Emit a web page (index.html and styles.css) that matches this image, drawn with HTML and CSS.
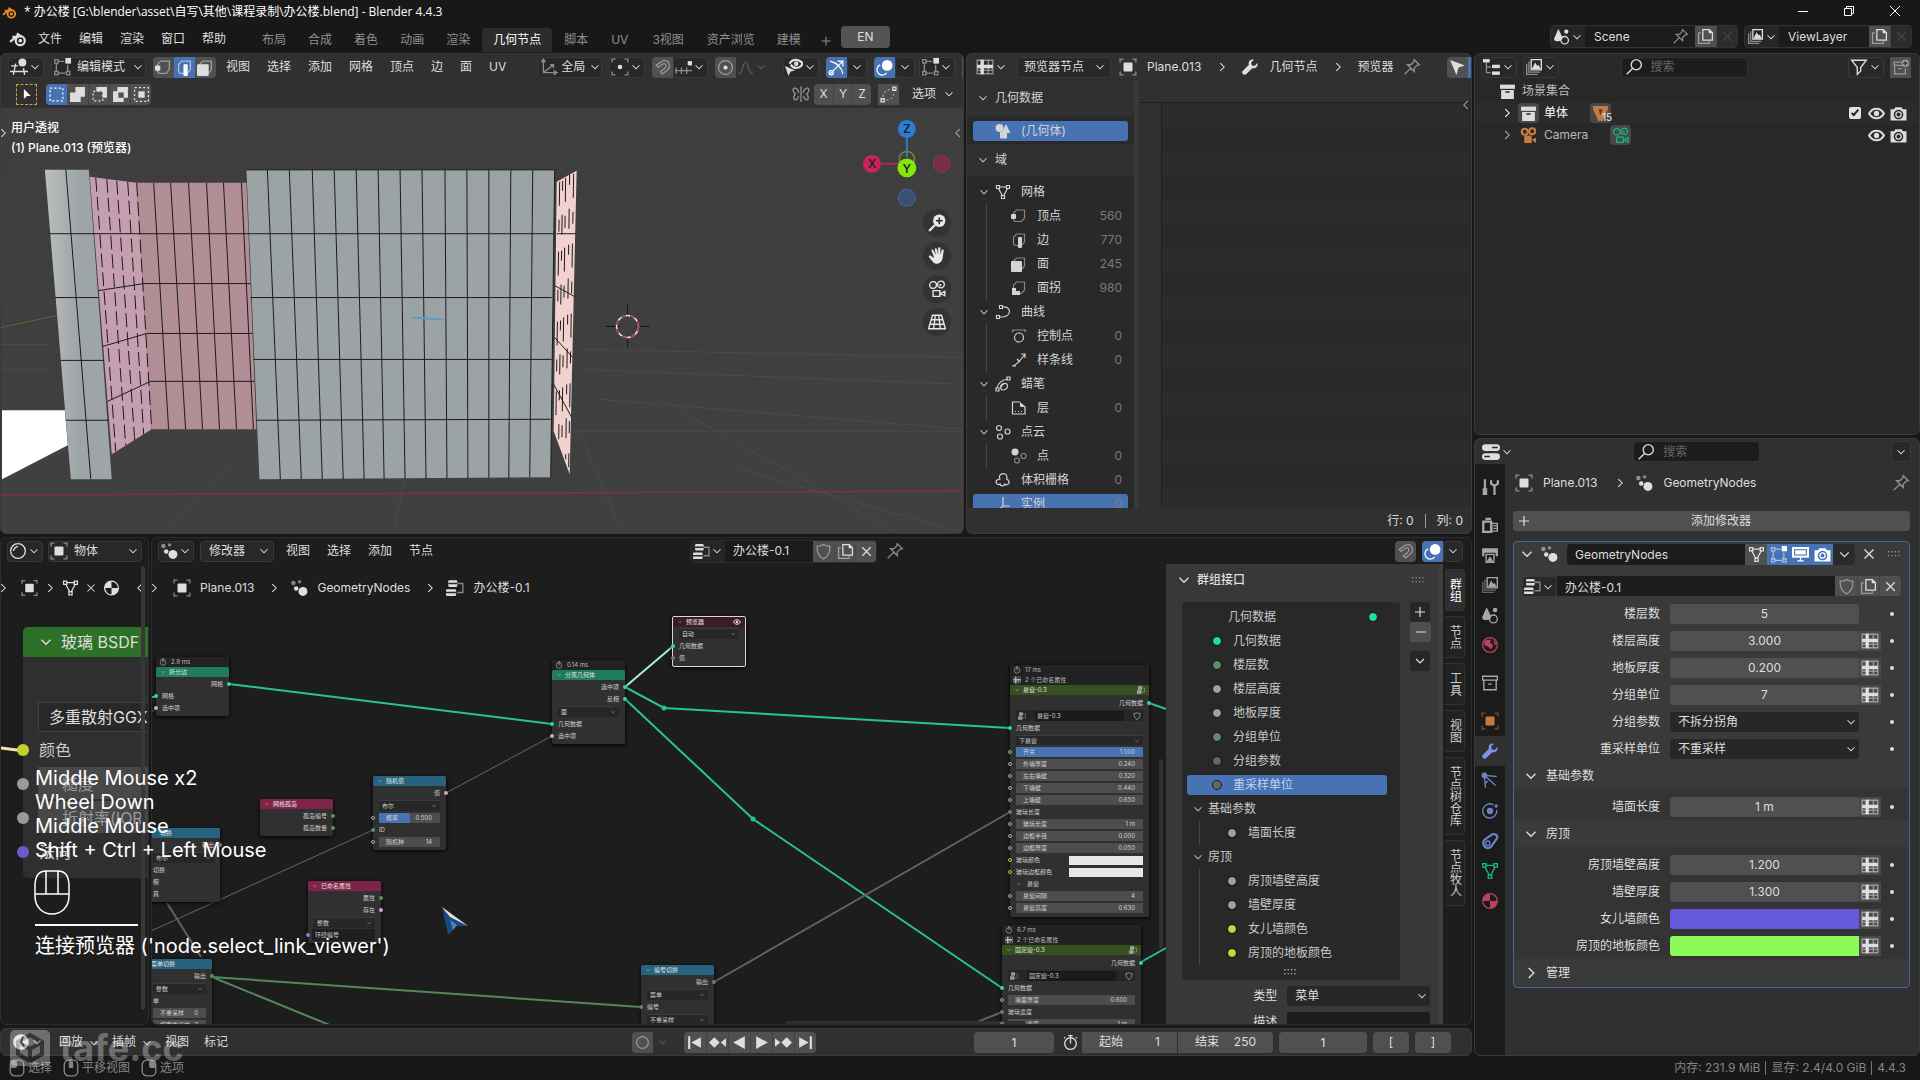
FILE: index.html
```html
<!DOCTYPE html>
<html lang="zh-CN">
<head>
<meta charset="utf-8">
<title>办公楼.blend - Blender 4.4.3</title>
<link rel="stylesheet" href="styles.css">
</head>
<body>
<svg class="defs" aria-hidden="true">
<defs>
<symbol id="cd" viewBox="0 0 16 16"><path class="s" d="M4 6l4 4 4-4"/></symbol>
<symbol id="cr" viewBox="0 0 16 16"><path class="s" d="M6 3.500l4.500 4.500-4.500 4.500"/></symbol>
<symbol id="cl" viewBox="0 0 16 16"><path class="s" d="M10 3.500l-4.500 4.500 4.500 4.500"/></symbol>
<symbol id="plus" viewBox="0 0 16 16"><path class="s" d="M8 3v10M3 8h10"/></symbol>
<symbol id="minus" viewBox="0 0 16 16"><path class="s" d="M3 8h10"/></symbol>
<symbol id="x" viewBox="0 0 16 16"><path class="s" d="M4 4l8 8M12 4l-8 8"/></symbol>
<symbol id="blender" viewBox="0 0 16 16"><path class="s w2" d="M1 10.500l7-6M3 6h6M7 3l4 3"/><circle class="s w2" cx="10" cy="9.500" r="4"/><circle class="f" cx="10" cy="9.500" r="1.700"/></symbol>
<symbol id="obj" viewBox="0 0 16 16"><path class="s dim" d="M1 4V1h3M12 1h3v3M15 12v3h-3M4 15H1v-3"/><rect class="f" x="4" y="4" width="8" height="8" rx="1"/></symbol>
<symbol id="wrench" viewBox="0 0 16 16"><path class="f" d="M14.500 4.500L12 7 9.500 6.500 9 4l2.500-2.500C9 .5 6 2.500 7 6L1.500 11.500c-1.500 1.500 1 4.500 3 3L10 9c3.500 1 5.500-2 4.500-4.500z"/></symbol>
<symbol id="pin" viewBox="0 0 16 16"><path class="s dim" d="M10 1.500l4.500 4.500-2 .5-2.500 2.500v3L4 6h3l2.500-2.500zM7 9l-5.500 5.500"/></symbol>
<symbol id="mesh" viewBox="0 0 16 16"><path class="s" d="M4 3h8M3.500 4.500l4 7.500M12.500 4.500l-4 7.500"/><path class="s" d="M1.500 1.500h3v3h-3zM11.500 1.500h3v3h-3zM6.500 11.500h3v3h-3z"/></symbol>
<symbol id="meshf" viewBox="0 0 16 16"><path class="f" fill-rule="evenodd" d="M1 1h14v3l-5 11H6L1 4zM6 4l2 6 2-6z"/></symbol>
<symbol id="cube" viewBox="0 0 16 16"><path class="s dim" d="M2.500 12V5l3-3h8v8l-3 3.500H4z"/></symbol>
<symbol id="vert" viewBox="0 0 16 16"><use href="#cube"/><rect class="f" x="0" y="6" width="5" height="5" rx="1"/></symbol>
<symbol id="edge" viewBox="0 0 16 16"><use href="#cube"/><rect class="f" x="7" y="5" width="4" height="11" rx="1"/></symbol>
<symbol id="face" viewBox="0 0 16 16"><use href="#cube"/><rect class="f" x="0" y="5" width="11" height="11" rx="1"/></symbol>
<symbol id="corner" viewBox="0 0 16 16"><use href="#cube"/><path class="f" d="M1 8h4v3h4v4H1z"/></symbol>
<symbol id="curve" viewBox="0 0 16 16"><path class="s" d="M8 3c8-1 9 9 0 10H5"/><path class="s" d="M4.500 1.500h3v3h-3zM1.500 11.500h3v3h-3z"/></symbol>
<symbol id="ctrl" viewBox="0 0 16 16"><circle class="s" cx="8" cy="9.500" r="4.500"/><path class="s dim" d="M1 2h14M1 4l2-2M15 4l-2-2"/></symbol>
<symbol id="spline" viewBox="0 0 16 16"><path class="s" d="M2 14C5 13 9 9 14 2M10 2h4v4M1 14h4M6 7l3 3"/></symbol>
<symbol id="gp" viewBox="0 0 16 16"><path class="s" d="M2 12c1-5 5-8 11-9M6 13c-2-4 3-7 6-5 2 3-1 6-4 6-4 0-2-5 1-6"/><path class="s" d="M1 12h3v3H1zM12 1h3v3h-3z"/></symbol>
<symbol id="layer" viewBox="0 0 16 16"><path class="s" d="M14 7v7H1.500V2H9"/><path class="f" d="M9 2l6 5h-5c-1 0-1-1-1-1zM4 11h1v1H4zM7 11h1v1H7zM10 11h1v1h-1z"/></symbol>
<symbol id="pcloud" viewBox="0 0 16 16"><circle class="s" cx="4" cy="4" r="2.500"/><circle class="s" cx="12.500" cy="7.500" r="2.500"/><circle class="s" cx="5" cy="12.500" r="2.500"/></symbol>
<symbol id="point" viewBox="0 0 16 16"><circle class="f" cx="4" cy="4" r="3.500"/><circle class="s dim" cx="12.500" cy="8" r="2.500"/><circle class="s dim" cx="6" cy="12.500" r="2.500"/></symbol>
<symbol id="volume" viewBox="0 0 16 16"><path class="s" d="M5 7c-3-5 6-8 7-2-1 2 0 2 1 3 3 3-1 6-3 4-1 3-5 2-5 0-3 2-5-2-3-4z"/></symbol>
<symbol id="inst" viewBox="0 0 16 16"><path class="s" d="M8 1v9h7M8 10l-6 5"/></symbol>
<symbol id="geo" viewBox="0 0 16 16"><circle class="f" cx="4.500" cy="5" r="4"/><path class="f" d="M11 1l4.500 9h-9z"/><rect class="f" x="5" y="8.500" width="7" height="7" rx="1"/></symbol>
<symbol id="sheet" viewBox="0 0 16 16"><path class="s dim" d="M1 2h14v12H1zM11 2v12M1 11h14"/><path class="s w3" d="M5.500 1.500v13M1 7.500h14"/></symbol>
<symbol id="dots" viewBox="0 0 16 16"><circle class="f dim" cx="3" cy="3.500" r="2"/><circle class="f dim" cx="8.500" cy="2.500" r="1.500"/><circle class="f" cx="5.500" cy="8.500" r="2"/><circle class="f" cx="11.500" cy="11" r="4"/></symbol>
<symbol id="tree" viewBox="0 0 16 16"><path class="s dim" d="M10 4h5v8h-5"/><rect class="f" x="2" y="1" width="8" height="6" rx="1"/><rect class="f" x="0" y="9" width="9" height="6" rx="1"/><path class="k" d="M2 4h8M0 12h9"/></symbol>
<symbol id="shield" viewBox="0 0 16 16"><path class="s" d="M8 1.500c2 1 4 1.500 6 1.500 0 6-1 9-6 12-5-3-6-6-6-12 2 0 4-.5 6-1.500z"/></symbol>
<symbol id="copy" viewBox="0 0 16 16"><path class="s dim" d="M3.500 4.500h-2v10h10v-2"/><path class="s" d="M5.500 1.500h6l3 3v7h-9z"/><path class="f" d="M11 1v4h4z"/></symbol>
<symbol id="magnet" viewBox="0 0 16 16"><path class="s" d="M2 6l6-4c6-2 9 5 4 9l-4 3-2-2 4-3c3-3 0-6-2-4L4 8z"/></symbol>
<symbol id="overlay" viewBox="0 0 16 16"><circle class="f" cx="10.500" cy="6" r="5"/><path class="s" d="M4 5.500a5 5 0 1 0 6 7.500"/></symbol>
<symbol id="scene" viewBox="0 0 16 16"><path class="f" d="M5 1l4 8c0 4-8 5-8 1z"/><circle class="f" cx="12.500" cy="3.500" r="2"/><circle class="s" cx="11" cy="11.500" r="3.500"/></symbol>
<symbol id="images" viewBox="0 0 16 16"><path class="s dim" d="M1.500 5v9.500h10M3.500 3v9.500h10"/><path class="s" d="M5.500 1.500h9v9h-9z"/><path class="f" d="M6 10l3-6 2 3 1-1 2 4z"/></symbol>
<symbol id="search" viewBox="0 0 16 16"><circle class="s" cx="10" cy="6" r="4.500"/><path class="s" d="M6.500 9.500L1.500 14.500"/></symbol>
<symbol id="funnel" viewBox="0 0 16 16"><path class="s" d="M1.500 2h13L9.500 8.500v3l-3 3v-6z"/></symbol>
<symbol id="archive" viewBox="0 0 16 16"><rect class="f" x="1" y="1.500" width="14" height="4"/><path class="f" d="M2 6.500h12V15H2z"/><path class="k" d="M6 8.500h4"/></symbol>
<symbol id="archo" viewBox="0 0 16 16"><path class="s" d="M1.500 2h13v3.500h-13zM2.500 5.500V14h11V5.500M6.500 9h3"/></symbol>
<symbol id="eye" viewBox="0 0 16 16"><path class="s w2" d="M1 8c3.500-6 10.500-6 14 0-3.500 6-10.500 6-14 0z"/><circle class="f" cx="8" cy="8" r="2.500"/></symbol>
<symbol id="photo" viewBox="0 0 16 16"><path class="f" fill-rule="evenodd" d="M5 2h6l1 2h3.500v10.500H.5V4H4zM8 4.500a4.500 4.500 0 1 0 .01 0z"/><circle class="s" cx="8" cy="9" r="2.500"/></symbol>
<symbol id="movie" viewBox="0 0 16 16"><circle class="s" cx="4.500" cy="4.500" r="3"/><circle class="s" cx="11.500" cy="4" r="3"/><circle class="f" cx="11" cy="4.500" r="1"/><path class="s" d="M4.500 9.500h6v5h-6zM11 12l4-2v4z"/></symbol>
<symbol id="movief" viewBox="0 0 16 16"><circle class="s w2" cx="4.500" cy="4.500" r="2.800"/><circle class="s w2" cx="11.500" cy="4" r="2.800"/><path class="f" d="M4 8h7v7H4zM11 12l4-2v5z"/></symbol>
<symbol id="mat" viewBox="0 0 16 16"><circle class="s" cx="8" cy="8" r="6.500"/><path class="f" d="M8 1.500V8H1.500A6.500 6.500 0 0 1 8 1.500zM8 8h6.500A6.500 6.500 0 0 1 8 14.500z"/></symbol>
<symbol id="ball" viewBox="0 0 16 16"><circle class="s" cx="8" cy="8" r="6.500"/><path class="s" d="M4 8c0-2 2-4 4-4"/></symbol>
<symbol id="clock" viewBox="0 0 16 16"><circle class="f" cx="8" cy="8" r="7"/><path class="k" d="M10 3L8 8l3 4"/></symbol>
<symbol id="watch" viewBox="0 0 16 16"><circle class="s" cx="8" cy="9" r="5.500"/><path class="s" d="M6 1.500h4M8 1.500V9M3 3L2 4M13 3l1 1"/></symbol>
<symbol id="tool" viewBox="0 0 16 16"><path class="s w2" d="M3.500 1v9M12 7v8M9 2v3l3 2 3-2V2"/><path class="f" d="M1.500 9h4v6h-4z"/></symbol>
<symbol id="render" viewBox="0 0 16 16"><path class="s w2" d="M2 5h7v9H2zM4 2.500h5"/><path class="s" d="M9.500 6.500h5v7h-5zM11 8.500h3M11 11h3"/></symbol>
<symbol id="print" viewBox="0 0 16 16"><path class="f" d="M1 2h14v7h-2V6H3v3H1z"/><path class="s" d="M4.500 7.500h7v7h-7z"/><path class="f" d="M5 14l3-5 3 5z"/></symbol>
<symbol id="world" viewBox="0 0 16 16"><circle class="s" cx="8" cy="8" r="6.500"/><path class="f" d="M3 4l6-1-1 3 3 2-2 4-2-2-4-2zM11 3l3 4-2 1z"/></symbol>
<symbol id="particle" viewBox="0 0 16 16"><circle class="f" cx="3" cy="3" r="2.500"/><path class="s" d="M3 3l11 1M3 3l10 9M3 3l1 11M6 8l-3 3"/></symbol>
<symbol id="physics" viewBox="0 0 16 16"><circle class="f" cx="8" cy="8" r="2.800"/><path class="s" d="M11 2.500A6.300 6.300 0 1 0 14 7"/><circle class="f" cx="13.500" cy="3.500" r="1.500"/></symbol>
<symbol id="constraint" viewBox="0 0 16 16"><path class="s w2" d="M3 7l7-5c4-1 5 2 4 4l-5 7c-4 4-9-2-6-6z"/><circle class="s" cx="6" cy="10" r="2"/></symbol>
<symbol id="grip" viewBox="0 0 16 16"><path class="s dots" d="M2 6h12M2 9.500h12"/></symbol>
<symbol id="v3d" viewBox="0 0 16 16"><circle class="f" cx="11" cy="4" r="3.500"/><path class="s" d="M1 7h6M0 12h16M5 5L3 15M12 9l1 6"/></symbol>
<symbol id="editm" viewBox="0 0 16 16"><path class="s dim" d="M3 5v7M5 3h5M5 13.500h6M13 6v6M1.500 1.500h3v3h-3zM1.500 12h3v3h-3zM12 12h3v3h-3z"/><rect class="f" x="11" y="0" width="5" height="5"/></symbol>
<symbol id="axes" viewBox="0 0 16 16"><path class="s dim" d="M3 2v11h12M3 13L12 6M1 4l2-3 2 3M12 11l3 2-3 2M9 6h3v3"/></symbol>
<symbol id="pivot" viewBox="0 0 16 16"><path class="s dim" d="M1 4V1h3M12 1h3v3M15 12v3h-3M4 15H1v-3"/><circle class="f" cx="8" cy="8" r="2"/></symbol>
<symbol id="inc" viewBox="0 0 16 16"><path class="s dim" d="M0 11h16M1 8v6M6 8v6M11 8v6"/><rect class="f" x="12" y="2" width="4" height="4"/></symbol>
<symbol id="prop" viewBox="0 0 16 16"><circle class="s dim" cx="8" cy="8" r="6.500"/><circle class="f" cx="8" cy="8" r="2"/></symbol>
<symbol id="bell" viewBox="0 0 16 16"><path class="s" d="M1 14C6 14 5 3 8 3s2 11 7 11"/></symbol>
<symbol id="vis" viewBox="0 0 16 16"><path class="s w2" d="M4 5c3-5 9-4 12 0-3 5-8 5-11 1"/><circle class="f" cx="10" cy="5" r="2"/><path class="f" d="M0 7l9 4-4 1-2 4z"/></symbol>
<symbol id="giz" viewBox="0 0 16 16"><path class="s" d="M2 2c7 2 11 6 12 12M2 14L14 2M9 2h5v5"/><circle class="s" cx="3" cy="13" r="2"/></symbol>
<symbol id="selbox" viewBox="0 0 16 16"><rect class="s dash" x="2" y="2" width="12" height="12"/></symbol>
<symbol id="selc" viewBox="0 0 16 16"><path class="s dash" d="M2 5h9v9H2z"/><path class="f" d="M5 1h10v10h-4V5H5z"/></symbol>
<symbol id="selu" viewBox="0 0 16 16"><path class="f" d="M6 1h9v9h-4v5H1V6h5z"/></symbol>
<symbol id="selx" viewBox="0 0 16 16"><path class="f" fill-rule="evenodd" d="M5 1h10v10h-4v4H1V5h4zM6 6v5h5V6z"/></symbol>
<symbol id="seli" viewBox="0 0 16 16"><rect class="s dash" x="1.500" y="1.500" width="13" height="13"/><rect class="f" x="5" y="5" width="6" height="6"/></symbol>
<symbol id="butterfly" viewBox="0 0 16 16"><path class="s dim" d="M6 7C5 2 1 2 1 4c0 3 1 3 2 4-2 2-2 6 1 5l2-3M10 7c1-5 5-5 5-3 0 3-1 3-2 4 2 2 2 6-1 5l-2-3M8 1v14"/></symbol>
<symbol id="autom" viewBox="0 0 16 16"><path class="s dim dash" d="M3 10c0-4 3-6 7-7M6 13c4 0 7-2 7-7"/><path class="s" d="M1 12h3v3H1zM12 1h3v3h-3z"/></symbol>
<symbol id="zoom" viewBox="0 0 16 16"><circle class="f" cx="10" cy="6" r="5.500"/><path class="s w2" d="M6 10l-5 5"/><path class="k" d="M10 3v6M7 6h6"/></symbol>
<symbol id="hand" viewBox="0 0 16 16"><path class="f" d="M5 8L3 3c0-1 1.500-1 2 0l2 4-1-5c0-1 1.500-1.500 2 0l1 5 0-6c0-1 2-1 2 0v6l1-4c0-1 2-1 2 0l-1 7c-1 5-6 6-8 4L1 9c-1-1 1-2 2-1l2 2z"/></symbol>
<symbol id="grid" viewBox="0 0 16 16"><path class="s" d="M4 2h8l3.500 12H.5zM3 6h10M2 10h12M6.500 2L5 14M9.500 2L11 14"/></symbol>
<symbol id="outl" viewBox="0 0 16 16"><rect class="f" x="0" y="1" width="6" height="3"/><rect class="f" x="8" y="6" width="7" height="3"/><rect class="f" x="8" y="12" width="7" height="3"/><path class="s dim" d="M3 4v9h4M3 8h4"/></symbol>
<symbol id="props" viewBox="0 0 16 16"><rect class="f" x="0" y="1" width="16" height="6" rx="3"/><rect class="f" x="0" y="9" width="16" height="6" rx="3"/><path class="k" d="M9 4h5M2 12h5"/></symbol>
<symbol id="newcol" viewBox="0 0 16 16"><path class="s" d="M9 3H2v3h8M2.500 6v8h10V9M6 9h3"/><circle class="f" cx="12.500" cy="4" r="3.500"/><path class="k" d="M12.500 2v4M10.500 4h4"/></symbol>
<symbol id="mon" viewBox="0 0 16 16"><rect class="s w2" x="1" y="2" width="14" height="8"/><rect class="f" x="3" y="4" width="10" height="4"/><path class="s" d="M5 14h6M8 10v4"/></symbol>
<symbol id="arrow" viewBox="0 0 16 16"><path class="f" d="M1 1l14 5-6 2-2 7z"/></symbol>
<symbol id="tarrow" viewBox="0 0 16 16"><path class="f" d="M3 0l11 11H8l-5 5z"/></symbol>
<symbol id="first" viewBox="0 0 16 16"><path class="f" d="M2 2h2v12H2zM14 3v10L5 8z"/></symbol>
<symbol id="last" viewBox="0 0 16 16"><path class="f" d="M12 2h2v12h-2zM2 3v10l9-5z"/></symbol>
<symbol id="pk" viewBox="0 0 16 16"><path class="f" d="M0 8l5-5 5 5-5 5zM16 4v8l-5-4z"/></symbol>
<symbol id="nk" viewBox="0 0 16 16"><path class="f" d="M16 8l-5-5-5 5 5 5zM0 4v8l5-4z"/></symbol>
<symbol id="rev" viewBox="0 0 16 16"><path class="f" d="M13 2v12L2 8z"/></symbol>
<symbol id="play" viewBox="0 0 16 16"><path class="f" d="M3 2v12l11-6z"/></symbol>
<symbol id="rec" viewBox="0 0 16 16"><circle class="s" cx="8" cy="8" r="5.500"/></symbol>
<symbol id="mouse" viewBox="0 0 16 16"><rect class="s" x="2" y="1" width="12" height="14" rx="4"/><rect class="f" x="2" y="1" width="6" height="7" rx="2"/></symbol>
<symbol id="mousem" viewBox="0 0 16 16"><rect class="s" x="2" y="1" width="12" height="14" rx="4"/><rect class="f" x="6" y="2" width="4" height="6" rx="1"/></symbol>
<symbol id="mouser" viewBox="0 0 16 16"><rect class="s" x="2" y="1" width="12" height="14" rx="4"/><rect class="f" x="8" y="1" width="6" height="7" rx="2"/></symbol>
</defs>
</svg>

<header class="titlebar">
  <svg class="i logo"><use href="#blender"/></svg>
  <h1>* 办公楼 [G:\blender\asset\自写\其他\课程录制\办公楼.blend] - Blender 4.4.3</h1>
  <div class="winbtns">
    <button aria-label="最小化"><svg viewBox="0 0 10 10"><path d="M0 5.500h10"/></svg></button>
    <button aria-label="还原"><svg viewBox="0 0 10 10"><path d="M.5 2.500h7v7h-7zM2.500 2.500v-2h7v7h-2"/></svg></button>
    <button aria-label="关闭"><svg viewBox="0 0 10 10"><path d="M0 0l10 10M10 0L0 10"/></svg></button>
  </div>
</header>
<nav class="topbar">
  <div class="menus"><svg class="i"><use href="#blender"/></svg><button>文件</button><button>编辑</button><button>渲染</button><button>窗口</button><button>帮助</button></div>
  <div class="tabs"><button>布局</button><button>合成</button><button>着色</button><button>动画</button><button>渲染</button><button class="on">几何节点</button><button>脚本</button><button class="lat">UV</button><button class="lat">3视图</button><button>资产浏览</button><button>建模</button><button class="add" aria-label="添加工作区"><svg class="i"><use href="#plus"/></svg></button></div>
  <button class="lang">EN</button>
  <div class="join scene"><button class="dd"><svg class="i"><use href="#scene"/></svg><svg class="c"><use href="#cd"/></svg></button><input aria-label="场景" value="Scene"><svg class="i pinned"><use href="#pin"/></svg><button class="g"><svg class="i"><use href="#copy"/></svg></button><button class="g off"><svg class="i"><use href="#x"/></svg></button></div>
  <div class="join vlayer"><button class="dd"><svg class="i"><use href="#images"/></svg><svg class="c"><use href="#cd"/></svg></button><input aria-label="视图层" value="ViewLayer"><button class="g"><svg class="i"><use href="#copy"/></svg></button><button class="g off"><svg class="i"><use href="#x"/></svg></button></div>
</nav>

<main>
<div class="left">
 <div class="toprow">
  <section class="area view3d">
    <div class="hdr">
      <button class="dd bx"><svg class="i"><use href="#v3d"/></svg><svg class="c"><use href="#cd"/></svg></button>
      <button class="dd bx mode"><svg class="i"><use href="#editm"/></svg><span>编辑模式</span><svg class="c"><use href="#cd"/></svg></button>
      <div class="join"><button class="g"><svg class="i"><use href="#vert"/></svg></button><button class="b"><svg class="i"><use href="#edge"/></svg></button><button class="g"><svg class="i"><use href="#face"/></svg></button></div>
      <div class="mn m3"><button>视图</button><button>选择</button><button>添加</button><button>网格</button><button>顶点</button><button>边</button><button>面</button><button>UV</button></div>
      <button class="dd bx orient"><svg class="i"><use href="#axes"/></svg><span>全局</span><svg class="c"><use href="#cd"/></svg></button>
      <button class="dd bx"><svg class="i"><use href="#pivot"/></svg><svg class="c"><use href="#cd"/></svg></button>
      <div class="join"><button class="g"><svg class="i dimmed"><use href="#magnet"/></svg></button><button class="dd bx"><svg class="i"><use href="#inc"/></svg><svg class="c"><use href="#cd"/></svg></button></div>
      <div class="join"><button class="g"><svg class="i"><use href="#prop"/></svg></button><button class="dd faded"><svg class="i"><use href="#bell"/></svg><svg class="c"><use href="#cd"/></svg></button></div>
      <span class="grow"></span>
      <button class="dd bx"><svg class="i"><use href="#vis"/></svg><svg class="c"><use href="#cd"/></svg></button>
      <div class="join"><button class="b"><svg class="i"><use href="#giz"/></svg></button><button class="dd bx nar"><svg class="c"><use href="#cd"/></svg></button></div>
      <div class="join"><button class="b"><svg class="i"><use href="#overlay"/></svg></button><button class="dd bx nar"><svg class="c"><use href="#cd"/></svg></button></div>
      <button class="dd bx tight"><svg class="i"><use href="#editm"/></svg><svg class="c"><use href="#cd"/></svg></button>
      <button class="g cut"><svg class="i"><use href="#images"/></svg></button>
    </div>
    <div class="hdr tools">
      <button class="arrowbox"><svg class="i"><use href="#tarrow"/></svg></button>
      <div class="join"><button class="b"><svg class="i"><use href="#selbox"/></svg></button><button class="g"><svg class="i"><use href="#selu"/></svg></button><button class="g"><svg class="i"><use href="#selc"/></svg></button><button class="g"><svg class="i"><use href="#selx"/></svg></button><button class="g"><svg class="i"><use href="#seli"/></svg></button></div>
      <span class="grow"></span>
      <svg class="i"><use href="#butterfly"/></svg>
      <div class="join xyz"><button class="g">X</button><button class="g">Y</button><button class="g">Z</button></div>
      <button class="g"><svg class="i"><use href="#autom"/></svg></button>
      <button class="dd bx opts"><span>选项</span><svg class="c"><use href="#cd"/></svg></button>
    </div>
    <div class="vp">
      <svg class="scene3d" viewBox="0 108 965 426" preserveAspectRatio="xMinYMin slice">
        <defs><linearGradient id="colg"><stop offset="0" stop-color="#bcbebe"/><stop offset=".5" stop-color="#9da5a7"/></linearGradient></defs>
        <g stroke="#4a4a4a" fill="none"><path d="M0 480L120 425M160 534L252 440M393 534L405 478M623 534L580 434M740 470L965 534M560 432H965M600 400L965 430M0 370H50M0 345H50M580 370L965 385M580 350L965 358M660 400L900 534"/></g>
        <path d="M0 328L56 316" stroke="#5e6436"/>
        <path d="M0 496L965 492" stroke="#842f47" stroke-width="1.500"/>
        <path d="M1 411H64L67 446L1 480z" fill="#fff"/>
        <path d="M136 183H246L256 430H151z" fill="#b18d95"/>
        <path d="M89 177L136 183L151 430L111 455z" fill="#c59faf"/>
        <path d="M44 170H88L111 480H70z" fill="url(#colg)"/>
        <path d="M246 170H555L551 478L259 480z" fill="#9ca3a5"/>
        <path d="M557 182L577 171L570 475L554 432z" fill="#f1d2ce"/>
        <g stroke="#1b1b1d" fill="none">
          <path d="M65 170L90 480M48 234H93M54 298H98M60 361H103M65 421H108"/>
          <path d="M92 234H246M98 291L143 284H250M102 347L146 334H252M107 402L150 382H254"/>
          <path d="M153 183L168 430M170 183L185 430M188 183L202 430M206 183L219 430M223 183L236 430M241 183L253 430"/>
          <path stroke-dasharray="14 5" d="M95 178L115 452M106 179L125 446M116 181L134 441M127 182L143 435M136 183L151 430"/>
          <path d="M267 170L280 480M289 170L301 480M312 170L322 480M334 170L343 480M356 170L364 480M378 170L384 480M400 170L405 480M422 170L426 480M445 170L447 479M467 170L468 479M489 170L489 479M511 170L509 479M533 170L530 478M555 170L551 478"/>
          <path d="M246 234H554M250 298H552M253 360H552M256 421L551 420M557 234H576M555 286L575 297M555 338L573 358M554 385L572 418M246 170H555"/>
          <path stroke-dasharray="24 14 12 20" d="M560 182L556 430M566 178L562 455M574 174L569 468"/>
          <path stroke-dasharray="10 24 20 16" d="M563 181L559 440M570 175L566 460"/>
        </g>
        <path d="M412 318L444 320" stroke="#5b9cc4" stroke-width="2"/>
        <path d="M628 305v13M628 336v12M606 327h14M636 327h14" stroke="#161616"/>
        <circle cx="628" cy="327" r="11" fill="none" stroke="#e6e6e6" stroke-width="1.500"/><circle cx="628" cy="327" r="11" fill="none" stroke="#a32743" stroke-width="1.500" stroke-dasharray="5 4"/>
        <path d="M908 137v20" stroke="#2f79c9" stroke-width="2"/><path d="M880 164h20" stroke="#b32752" stroke-width="2"/>
        <circle cx="908" cy="159" r="7.500" fill="none" stroke="#6f8a3a" stroke-width="1.500"/>
        <circle cx="908" cy="129" r="9" fill="#2c7dd2"/><circle cx="873" cy="164" r="9" fill="#c9235a"/><circle cx="908" cy="168" r="9.500" fill="#85e60c"/>
        <circle cx="943" cy="164" r="8.500" fill="#74304a" stroke="#9c2c50"/><circle cx="908" cy="198" r="8.500" fill="#3c4f70" stroke="#3c6ca8"/>
        <g class="ax"><text x="908" y="133">Z</text><text x="873" y="168">X</text><text x="908" y="173">Y</text></g>
      </svg>
      <p class="vtext">用户透视<br>(1) Plane.013 (预览器)</p>
      <div class="navs"><button aria-label="缩放"><svg class="i"><use href="#zoom"/></svg></button><button aria-label="平移"><svg class="i"><use href="#hand"/></svg></button><button aria-label="相机"><svg class="i"><use href="#movie"/></svg></button><button aria-label="透视"><svg class="i"><use href="#grid"/></svg></button></div>
      <svg class="c edgel"><use href="#cr"/></svg><svg class="c edger"><use href="#cl"/></svg>
    </div>
  </section>

  <section class="area sheet">
    <div class="hdr">
      <button class="dd"><svg class="i"><use href="#sheet"/></svg><svg class="c"><use href="#cd"/></svg></button>
      <button class="dd bx pv"><span>预览器节点</span><svg class="c"><use href="#cd"/></svg></button>
      <div class="crumb"><svg class="i"><use href="#obj"/></svg><span>Plane.013</span><svg class="c"><use href="#cr"/></svg><svg class="i"><use href="#wrench"/></svg><span>几何节点</span><svg class="c"><use href="#cr"/></svg><span>预览器</span><svg class="i"><use href="#pin"/></svg></div>
      <span class="grow"></span>
      <div class="join edgebtn"><button class="g"><svg class="i"><use href="#arrow"/></svg></button><button class="b"></button></div>
    </div>
    <div class="sbody">
      <div class="tree">
        <h2><svg class="c"><use href="#cd"/></svg>几何数据</h2>
        <div class="selrow"><svg class="i"><use href="#geo"/></svg>(几何体)</div>
        <h2><svg class="c"><use href="#cd"/></svg>域</h2>
        <ul>
          <li><svg class="c"><use href="#cd"/></svg><svg class="i"><use href="#mesh"/></svg>网格</li>
          <li class="sub"><svg class="i"><use href="#vert"/></svg>顶点<b>560</b></li>
          <li class="sub"><svg class="i"><use href="#edge"/></svg>边<b>770</b></li>
          <li class="sub"><svg class="i"><use href="#face"/></svg>面<b>245</b></li>
          <li class="sub"><svg class="i"><use href="#corner"/></svg>面拐<b>980</b></li>
          <li><svg class="c"><use href="#cd"/></svg><svg class="i"><use href="#curve"/></svg>曲线</li>
          <li class="sub"><svg class="i"><use href="#ctrl"/></svg>控制点<b>0</b></li>
          <li class="sub"><svg class="i"><use href="#spline"/></svg>样条线<b>0</b></li>
          <li><svg class="c"><use href="#cd"/></svg><svg class="i"><use href="#gp"/></svg>蜡笔</li>
          <li class="sub"><svg class="i"><use href="#layer"/></svg>层<b>0</b></li>
          <li><svg class="c"><use href="#cd"/></svg><svg class="i"><use href="#pcloud"/></svg>点云</li>
          <li class="sub"><svg class="i"><use href="#point"/></svg>点<b>0</b></li>
          <li class="leaf"><svg class="i"><use href="#volume"/></svg>体积栅格<b>0</b></li>
          <li class="leaf act"><svg class="i"><use href="#inst"/></svg>实例<b>0</b></li>
        </ul>
      </div>
      <div class="cells"></div>
      <svg class="c edger"><use href="#cl"/></svg>
    </div>
    <div class="sfoot"><span>行: 0</span><i></i><span>列: 0</span></div>
  </section>
 </div>

 <div class="noderow">
  <section class="area mated">
    <div class="hdr"><button class="dd bx"><svg class="i"><use href="#ball"/></svg><svg class="c"><use href="#cd"/></svg></button><button class="dd bx wide"><svg class="i"><use href="#obj"/></svg><span>物体</span><svg class="c"><use href="#cd"/></svg></button></div>
    <div class="mcrumb"><svg class="c"><use href="#cr"/></svg><svg class="i"><use href="#obj"/></svg><svg class="c"><use href="#cr"/></svg><svg class="i"><use href="#mesh"/></svg><svg class="c"><use href="#x"/></svg><svg class="i"><use href="#mat"/></svg><svg class="c"><use href="#cl"/></svg></div>
    <svg class="mlink"><path d="M0 210l24 3" stroke="#eee6b0" stroke-width="3"/></svg>
    <article class="bsdf">
      <h3><svg class="i"><use href="#cd"/></svg>玻璃 BSDF</h3>
      <div class="dist">多重散射GGX</div>
      <p class="sk y">颜色</p><p class="sk fld">糙度</p><p class="sk fld">折射率(IOR</p><p class="sk v">法向</p>
    </article>
    <i class="vbar"></i>
  </section>

  <section class="area geoed">
    <div class="canvas">
      <svg class="links"><g transform="translate(-151 -537)" fill="none">
        <g stroke="#27c492" stroke-width="2"><path d="M151 697h5M229 684L552 724M625 687L664 708L1010 728M625 699L753 819L1002 988M1149 703L1166 709M1141 962L1166 948"/></g>
        <path d="M625 687L672 647" stroke="#a9efd8" stroke-width="2"/>
        <path d="M446 793L552 736M151 712l5-3M151 931L373 830" stroke="#66666a"/>
        <path d="M714 982L1010 812M967 1026L1002 1012M167 903L201 957" stroke="#626262" stroke-width="2"/>
        <path d="M212 977L641 1007M212 977L332 1026" stroke="#54875a" stroke-width="2"/>
        <g fill="#27c492"><circle cx="664" cy="708" r="2.500"/><circle cx="753" cy="819" r="2.500"/></g>
      </g></svg>
      <article class="node n-split"><div class="ms"><svg><use href="#watch"/></svg>2.9 ms</div><h3 class="green"><svg><use href="#cd"/></svg>拆分边</h3><p class="o geo">网格</p><p class="geo">网格</p><p class="bool">选中项</p></article>
      <article class="node n-view"><h3 class="wine"><svg><use href="#cd"/></svg>预览器<svg class="end"><use href="#eye"/></svg></h3><div class="ds">自动<svg><use href="#cd"/></svg></div><p class="geo">几何数据</p><p class="gray">值</p></article>
      <article class="node n-sep"><div class="ms"><svg><use href="#watch"/></svg>0.14 ms</div><h3 class="green"><svg><use href="#cd"/></svg>分离几何体</h3><p class="o geo">选中项</p><p class="o geo">反相</p><div class="ds">面<svg><use href="#cd"/></svg></div><p class="geo">几何数据</p><p class="bool">选中项</p></article>
      <article class="node n-rand"><h3 class="blue"><svg><use href="#cd"/></svg>随机值</h3><p class="o bool">值</p><div class="ds">布尔<svg><use href="#cd"/></svg></div><p class="f half dia">概率<b>0.500</b></p><p class="int">ID</p><p class="f dia">随机种<b>14</b></p></article>
      <article class="node n-isle"><h3 class="red"><svg><use href="#cd"/></svg>网格孤岛</h3><p class="o int">孤岛编号</p><p class="o int">孤岛数量</p></article>
      <article class="node n-attr"><h3 class="red"><svg><use href="#cd"/></svg>已命名属性</h3><p class="o int">属性</p><p class="o bool">存在</p><div class="ds">整数<svg><use href="#cd"/></svg></div><p class="str"><span>环绕编号</span></p></article>
      <article class="node n-switch"><h3 class="blue"><svg></svg>切换</h3><p class="o gray">输出</p><div class="ds">布尔<svg><use href="#cd"/></svg></div><p>切换</p><p>假</p><p>真</p></article>
      <article class="node n-menu"><h3 class="blue">菜单切换</h3><p class="o int">输出</p><div class="ds">整数<svg><use href="#cd"/></svg></div><p>单</p><p class="f">不重采样<b>0</b></p><p class="f">按面重采样<b>7</b></p></article>
      <article class="node n-idx"><h3 class="blue"><svg><use href="#cd"/></svg>编号切换</h3><p class="o gray">输出</p><div class="ds">菜单<svg><use href="#cd"/></svg></div><p class="gray">编号</p><div class="ds">不重采样<svg><use href="#cd"/></svg></div></article>
      <article class="node big n-win"><div class="ms"><svg><use href="#watch"/></svg>17 ms</div><div class="ms"><svg><use href="#sheet"/></svg>2 个已命名属性</div><h3 class="olive"><svg><use href="#cd"/></svg>悬窗-0.3<svg class="end"><use href="#tree"/></svg></h3><p class="o geo">几何数据</p><div class="grp"><svg><use href="#tree"/></svg><span>悬窗-0.3</span><svg><use href="#shield"/></svg></div><p class="geo">几何数据</p><div class="ds">下悬窗<svg><use href="#cd"/></svg></div><p class="f full dia">开关<b>1.000</b></p><p class="f dia">外墙厚度<b>0.240</b></p><p class="f dia">左右墙壁<b>0.320</b></p><p class="f dia">下墙壁<b>0.440</b></p><p class="f dia">上墙壁<b>0.650</b></p><p class="gray">玻璃长度</p><p class="f dia">玻璃长度<b>1 m</b></p><p class="f dia">边框半径<b>0.000</b></p><p class="f dia">边框厚度<b>0.050</b></p><p class="col dia">玻璃颜色<b></b></p><p class="col dia">玻璃边框颜色<b></b></p><p class="fold"><svg><use href="#cd"/></svg>悬窗</p><p class="f dia">悬窗间隔<b>4</b></p><p class="f dia">悬窗高度<b>0.630</b></p></article>
      <article class="node big n-fix"><div class="ms"><svg><use href="#watch"/></svg>6.7 ms</div><div class="ms"><svg><use href="#sheet"/></svg>2 个已命名属性</div><h3 class="olive"><svg><use href="#cd"/></svg>固定窗-0.3<svg class="end"><use href="#tree"/></svg></h3><p class="o geo">几何数据</p><div class="grp"><svg><use href="#tree"/></svg><span>固定窗-0.3</span><svg><use href="#shield"/></svg></div><p class="geo">几何数据</p><p class="f dia">墙面厚度<b>0.600</b></p><p class="gray">玻璃宽度</p><p class="f dia">玻璃宽度<b>1 m</b></p></article>
      <i class="vbar"></i><i class="hbar"></i>
      <svg class="pointer" viewBox="0 0 26 28"><path d="M0 0l26 19-11 0-9 9z" fill="#174a80"/><path d="M0 0l26 19L8 10z" fill="#e4e0d8"/><path d="M8 13l7 5-4 5z" fill="#4f86b4"/></svg>
    </div>
    <div class="hdr">
      <button class="dd bx"><svg class="i"><use href="#dots"/></svg><svg class="c"><use href="#cd"/></svg></button>
      <button class="dd bx modif"><span>修改器</span><svg class="c"><use href="#cd"/></svg></button>
      <div class="mn"><button>视图</button><button>选择</button><button>添加</button><button>节点</button></div>
      <div class="join gname"><button class="dd"><svg class="i"><use href="#tree"/></svg><svg class="c"><use href="#cd"/></svg></button><input aria-label="节点组" value="办公楼-0.1"><button class="g"><svg class="i dimmed"><use href="#shield"/></svg></button><button class="g"><svg class="i"><use href="#copy"/></svg></button><button class="g"><svg class="i"><use href="#x"/></svg></button></div>
      <svg class="i gpin"><use href="#pin"/></svg>
      <span class="grow"></span>
      <button class="g sp"><svg class="i dimmed"><use href="#magnet"/></svg></button>
      <div class="join"><button class="b"><svg class="i"><use href="#overlay"/></svg></button><button class="dd bx nar"><svg class="c"><use href="#cd"/></svg></button></div>
    </div>
    <div class="gbody">
      <div class="crumb"><svg class="c"><use href="#cr"/></svg><svg class="i"><use href="#obj"/></svg><span>Plane.013</span><svg class="c"><use href="#cr"/></svg><svg class="i"><use href="#dots"/></svg><span>GeometryNodes</span><svg class="c"><use href="#cr"/></svg><svg class="i"><use href="#tree"/></svg><span>办公楼-0.1</span></div>
      <aside class="side">
        <h2><svg class="i"><use href="#cd"/></svg>群组接口<svg class="i grip"><use href="#grip"/></svg></h2>
        <div class="iface">
          <ul>
            <li class="out">几何数据<i class="d geo"></i></li>
            <li><i class="d geo"></i>几何数据</li>
            <li><i class="d int"></i>楼层数</li>
            <li><i class="d"></i>楼层高度</li>
            <li><i class="d"></i>地板厚度</li>
            <li><i class="d int"></i>分组单位</li>
            <li><i class="d menu"></i>分组参数</li>
            <li class="act"><i class="d menu"></i>重采样单位</li>
            <li class="hd"><svg class="c"><use href="#cd"/></svg>基础参数</li>
            <li class="in"><i class="d"></i>墙面长度</li>
            <li class="hd"><svg class="c"><use href="#cd"/></svg>房顶</li>
            <li class="in"><i class="d"></i>房顶墙壁高度</li>
            <li class="in"><i class="d"></i>墙壁厚度</li>
            <li class="in"><i class="d yel"></i>女儿墙颜色</li>
            <li class="in"><i class="d yel"></i>房顶的地板颜色</li>
            <li class="gr"><svg class="i"><use href="#grip"/></svg></li>
          </ul>
          <div class="btns"><button aria-label="添加"><svg class="i"><use href="#plus"/></svg></button><button class="g" aria-label="移除"><svg class="i"><use href="#minus"/></svg></button><button aria-label="更多"><svg class="i"><use href="#cd"/></svg></button></div>
        </div>
        <div class="frow"><label for="ty">类型</label><span class="sel"><select id="ty"><option>菜单</option></select><svg class="c"><use href="#cd"/></svg></span></div>
        <div class="frow"><label for="de">描述</label><input id="de"></div>
      </aside>
      <div class="vtabs"><button class="on">群组</button><button>节点</button><button>工具</button><button>视图</button><button>节点树仓库</button><button>节点牧人</button></div>
    </div>
  </section>

  <div class="cast">
    <p>Middle Mouse x2</p><p>Wheel Down</p><p>Middle Mouse</p><p>Shift + Ctrl + Left Mouse</p>
    <svg viewBox="0 0 36 46"><path d="M1 16C1 6 5 1 12 1h12c7 0 11 5 11 15v10c0 24-34 24-34 0zM1 24h34M12 1v23M24 1v23" fill="none" stroke="#fff" stroke-width="1.500"/></svg>
    <hr>
    <p>连接预览器 ('node.select_link_viewer')</p>
  </div>
 </div>

 <section class="area timeline">
   <button class="dd"><svg class="i"><use href="#clock"/></svg><svg class="c"><use href="#cd"/></svg></button>
   <div class="tmn"><button>回放<svg class="c"><use href="#cd"/></svg></button><button>插帧<svg class="c"><use href="#cd"/></svg></button><button>视图</button><button>标记</button></div>
   <span class="grow a"></span>
   <div class="join"><button class="g"><svg class="i dimmed"><use href="#rec"/></svg></button><button class="faded"><svg class="c"><use href="#cd"/></svg></button></div>
   <div class="join play"><button class="g"><svg class="i"><use href="#first"/></svg></button><button class="g"><svg class="i"><use href="#pk"/></svg></button><button class="g"><svg class="i"><use href="#rev"/></svg></button><button class="g"><svg class="i"><use href="#play"/></svg></button><button class="g"><svg class="i"><use href="#nk"/></svg></button><button class="g"><svg class="i"><use href="#last"/></svg></button></div>
   <span class="grow"></span>
   <input class="num w80" aria-label="当前帧" value="1">
   <div class="join"><button class="dd"><svg class="i"><use href="#watch"/></svg></button><label class="num rng">起始<input value="1"></label><label class="num rng">结束<input value="250"></label></div>
   <input class="num w88" aria-label="时间" value="1">
   <button class="g w36">[</button><button class="g w36">]</button>
 </section>
</div>

<div class="right">
  <section class="area outliner">
    <div class="hdr"><button class="dd bx"><svg class="i"><use href="#outl"/></svg><svg class="c"><use href="#cd"/></svg></button><button class="dd bx"><svg class="i"><use href="#images"/></svg><svg class="c"><use href="#cd"/></svg></button><span class="grow o1"></span><label class="find"><svg class="i"><use href="#search"/></svg><input placeholder="搜索" aria-label="搜索"></label><span class="grow o2"></span><button class="dd bx"><svg class="i"><use href="#funnel"/></svg><svg class="c"><use href="#cd"/></svg></button><button class="g"><svg class="i dimmed"><use href="#newcol"/></svg></button></div>
    <ul class="orows">
      <li class="root"><svg class="i"><use href="#archive"/></svg><span>场景集合</span></li>
      <li class="wht"><svg class="c"><use href="#cr"/></svg><span class="chip"><svg class="i"><use href="#archive"/></svg></span><span>单体</span><span class="chip orange cnt"><svg class="i"><use href="#meshf"/></svg><sub>15</sub></span><span class="grow"></span><input type="checkbox" checked aria-label="启用"><svg class="i"><use href="#eye"/></svg><svg class="i"><use href="#photo"/></svg></li>
      <li><svg class="c"><use href="#cr"/></svg><span class="ic orange"><svg class="i"><use href="#movief"/></svg></span><span>Camera</span><span class="chip teal"><svg class="i"><use href="#movie"/></svg></span><span class="grow"></span><svg class="i"><use href="#eye"/></svg><svg class="i"><use href="#photo"/></svg></li>
    </ul>
  </section>

  <section class="area props">
    <div class="hdr"><button class="dd"><svg class="i"><use href="#props"/></svg><svg class="c"><use href="#cd"/></svg></button><span class="grow o1"></span><label class="find"><svg class="i"><use href="#search"/></svg><input placeholder="搜索" aria-label="搜索属性"></label><span class="grow o2"></span><button class="dd bx nar"><svg class="c"><use href="#cd"/></svg></button></div>
    <div class="pbody">
      <nav class="ptabs"><button class="gap"><svg class="i"><use href="#tool"/></svg></button><button><svg class="i"><use href="#render"/></svg></button><button><svg class="i"><use href="#print"/></svg></button><button><svg class="i"><use href="#images"/></svg></button><button><svg class="i"><use href="#scene"/></svg></button><button class="gap rose"><svg class="i"><use href="#world"/></svg></button><button class="gap"><svg class="i"><use href="#archo"/></svg></button><button class="orange"><svg class="i"><use href="#obj"/></svg></button><button class="on"><svg class="i"><use href="#wrench"/></svg></button><button class="bl"><svg class="i"><use href="#particle"/></svg></button><button class="bl"><svg class="i"><use href="#physics"/></svg></button><button class="bl"><svg class="i"><use href="#constraint"/></svg></button><button class="teal"><svg class="i"><use href="#mesh"/></svg></button><button class="rose"><svg class="i"><use href="#mat"/></svg></button></nav>
      <div class="pmain">
        <div class="crumb"><svg class="i"><use href="#obj"/></svg><span>Plane.013</span><svg class="c"><use href="#cr"/></svg><svg class="i"><use href="#dots"/></svg><span>GeometryNodes</span><span class="grow"></span><svg class="i"><use href="#pin"/></svg></div>
        <button class="addmod"><svg class="i"><use href="#plus"/></svg>添加修改器</button>
        <div class="panel">
          <div class="mh"><svg class="i"><use href="#cd"/></svg><svg class="i"><use href="#dots"/></svg><div class="join"><input aria-label="修改器名称" value="GeometryNodes"><button class="g"><svg class="i"><use href="#mesh"/></svg></button><button class="b"><svg class="i"><use href="#editm"/></svg></button><button class="b"><svg class="i"><use href="#mon"/></svg></button><button class="b"><svg class="i"><use href="#photo"/></svg></button><button class="dd"><svg class="i"><use href="#cd"/></svg></button></div><svg class="i"><use href="#x"/></svg><svg class="i grip"><use href="#grip"/></svg></div>
          <div class="join ng"><button class="dd bx"><svg class="i"><use href="#tree"/></svg><svg class="c"><use href="#cd"/></svg></button><input aria-label="节点组" value="办公楼-0.1"><button class="g"><svg class="i dimmed"><use href="#shield"/></svg></button><button class="g"><svg class="i"><use href="#copy"/></svg></button><button class="g"><svg class="i"><use href="#x"/></svg></button></div>
          <div class="pr"><label for="p1">楼层数</label><input id="p1" value="5"><span></span><i></i></div>
          <div class="pr"><label for="p2">楼层高度</label><input id="p2" value="3.000"><button class="at"><svg class="i"><use href="#sheet"/></svg></button><i></i></div>
          <div class="pr"><label for="p3">地板厚度</label><input id="p3" value="0.200"><button class="at"><svg class="i"><use href="#sheet"/></svg></button><i></i></div>
          <div class="pr"><label for="p4">分组单位</label><input id="p4" value="7"><button class="at"><svg class="i"><use href="#sheet"/></svg></button><i></i></div>
          <div class="pr"><label for="p5">分组参数</label><span class="sel"><select id="p5"><option>不拆分拐角</option></select><svg class="c"><use href="#cd"/></svg></span><span></span><i></i></div>
          <div class="pr"><label for="p6">重采样单位</label><span class="sel"><select id="p6"><option>不重采样</option></select><svg class="c"><use href="#cd"/></svg></span><span></span><i></i></div>
          <h3><svg class="i"><use href="#cd"/></svg>基础参数</h3>
          <div class="subp"><div class="pr"><label for="p7">墙面长度</label><input id="p7" value="1 m"><button class="at"><svg class="i"><use href="#sheet"/></svg></button><i></i></div></div>
          <h3><svg class="i"><use href="#cd"/></svg>房顶</h3>
          <div class="subp">
          <div class="pr"><label for="p8">房顶墙壁高度</label><input id="p8" value="1.200"><button class="at"><svg class="i"><use href="#sheet"/></svg></button><i></i></div>
          <div class="pr"><label for="p9">墙壁厚度</label><input id="p9" value="1.300"><button class="at"><svg class="i"><use href="#sheet"/></svg></button><i></i></div>
          <div class="pr"><label for="pa">女儿墙颜色</label><button id="pa" class="sw violet"></button><button class="at"><svg class="i"><use href="#sheet"/></svg></button><i></i></div>
          <div class="pr"><label for="pb">房顶的地板颜色</label><button id="pb" class="sw lime"></button><button class="at"><svg class="i"><use href="#sheet"/></svg></button><i></i></div>
          </div>
          <h3><svg class="i"><use href="#cr"/></svg>管理</h3>
        </div>
      </div>
    </div>
  </section>
</div>
</main>

<footer class="status">
  <span><svg class="i"><use href="#mouse"/></svg>选择</span><span><svg class="i"><use href="#mousem"/></svg>平移视图</span><span><svg class="i"><use href="#mouser"/></svg>选项</span>
  <span class="grow"></span><span class="mem">内存: 231.9 MiB <i></i> 显存: 2.4/4.0 GiB <i></i> 4.4.3</span>
  <div class="mark"><svg viewBox="0 0 40 36"><rect width="40" height="36" rx="5" fill="#fff"/><path d="M8 12l12-7 12 7v12l-12 7-12-7zM8 12l12 7 12-7M20 19v12" fill="none" stroke="#444" stroke-width="4"/></svg><span>tafe.cc</span></div>
</footer>
</body>
</html>
```
FILE: styles.css
```css
*,*::before,*::after{box-sizing:border-box}
html,body{height:100%;margin:0}
body{display:flex;flex-direction:column;overflow:hidden;background:#181818;color:#dedede;font:12px/16px Inter,"Noto Sans CJK SC",sans-serif;position:relative}
button,input,select{font:inherit;color:inherit;border:0;background:none;padding:0;margin:0;min-width:0}
h1,h2,h3,p,ul{margin:0;padding:0;font-size:inherit;font-weight:400;list-style:none}
.defs{position:absolute;width:0;height:0}
.s{fill:none;stroke:currentColor;stroke-width:1.2}
.f{fill:currentColor}
.k{fill:none;stroke:#2a2a2a;stroke-width:1.4}
.w2{stroke-width:2}
.w3{stroke-width:3}
.dim{opacity:.55}
.dash{stroke-dasharray:2 2}
.dots{stroke-dasharray:1 2}
.i{width:18px;height:18px;flex:none}
.c{width:14px;height:14px;flex:none}
.dimmed{opacity:.5}
.faded{opacity:.25}
.grow{flex:1}

.titlebar{height:24px;flex:none;display:flex;align-items:center;gap:7px;padding-left:2px;color:#fff}
.titlebar h1{font-family:"Open Sans","Noto Sans CJK SC",sans-serif;flex:1}
.logo{width:15px;height:15px;color:#e88b28}
.winbtns{display:flex;padding-right:2px}
.winbtns button{width:46px;height:20px}
.winbtns svg{width:10px;height:10px;fill:none;stroke:#fff}

.topbar{height:29px;flex:none;display:flex;align-items:center;padding:0 8px 0 9px}
.menus{display:flex;align-items:center;gap:17px}
.menus .i{margin-right:-6px}
.tabs{display:flex;align-self:end;margin:0 0 1px 25px;color:#8f8f8f}
.tabs button{height:24px;padding:0 11px;border-radius:4px 4px 0 0}
.tabs .on{background:#2c2c2c;color:#fff;margin:0 1px}
.tabs .lat{padding:0 12px}
.tabs .add{padding:0 6px;width:28px}
.tabs .i{width:14px;height:14px;vertical-align:middle}
.lang{width:49px;height:22px;margin:-4px auto 0 1px;background:#545454;border-radius:4px}
.join{display:flex;border-radius:4px;overflow:hidden;flex:none}
.join button,.g,.b{height:21px;min-width:21px;display:flex;align-items:center;justify-content:center}
.g{background:#505050}
.b{background:#4772b3;color:#fff}
.join .g+.g{border-left:1px solid #444}
.join .i,.g .i,.b .i{width:17px;height:17px}
.dd{display:flex;align-items:center;gap:0;height:21px;padding:0 1px;flex:none}
.bx{background:#282828;border:1px solid #393939;border-radius:4px}
.join .nar{width:20px;min-width:20px;justify-content:center}
.nar{width:20px;justify-content:center}
.topbar .join{margin-top:-4px;background:#1d1d1d;border:1px solid #333;align-items:center}
.topbar .dd{width:34px;background:#262626}
.topbar input{padding-left:9px;background:#1b1b1b;height:20px}
.scene{width:188px}
.scene input{width:88px;flex:1}
.vlayer{width:168px;margin-left:6px}
.vlayer input{flex:1;width:80px}
.off{color:#444;background:#2c2c2c}
.pinned{margin:0 6px 0 0}

main{flex:1;min-height:0;display:grid;grid-template-columns:minmax(0,1472fr) minmax(0,446fr);gap:2px}
.left{display:grid;grid-template-rows:minmax(0,481fr) minmax(0,488fr) 28px;gap:3px;min-height:0}
.right{display:grid;grid-template-rows:minmax(0,382fr) minmax(0,618fr);gap:3px;min-height:0}
.toprow{display:grid;grid-template-columns:minmax(0,964fr) minmax(0,506fr);gap:2px}
.noderow{display:grid;grid-template-columns:minmax(0,149fr) minmax(0,1321fr);gap:2px;position:relative}
.area{border-radius:6px;overflow:hidden;position:relative;background:#303030;border:1px solid #3a3a3a;display:flex;flex-direction:column;min-height:0}
.hdr{height:26px;flex:none;display:flex;align-items:center;gap:8px;padding:0 7px;position:relative;white-space:nowrap}
.mn{display:flex;gap:17px;padding:0 8px}
.m3{padding:0 25px 0 3px}
.mode{width:95px;gap:6px}
.mode .c,.orient .c{margin-left:auto}
.orient{width:64px;gap:3px}
.view3d .hdr{gap:7px}
.view3d .tight{margin-left:-3px}
.view3d .cut{width:9px;min-width:9px;flex:none;overflow:hidden;margin-right:-7px;justify-content:flex-start;padding-left:2px}
.tools{height:28px;padding:0 7px 0 15px}
.arrowbox{width:21px;height:21px;border:1px dashed #c5a23c;color:#fff;display:grid;place-items:center}
.arrowbox .i{width:10px;height:10px}
.tools .join{margin-left:2px}
.tools .xyz{margin-left:-3px}
.xyz button{width:19px;min-width:19px}
.opts{width:50px;padding:0 4px 0 6px;gap:6px;background:none;border:0}
.vp{flex:1;position:relative;background:linear-gradient(#3e3e3e,#404040);min-height:0}
.scene3d{position:absolute;inset:0;width:100%;height:100%}
.ax{font-size:12px;font-weight:600;text-anchor:middle;fill:#1c2430}
.vtext{position:relative;padding:10px 0 0 10px;line-height:20px;color:#fff;font-weight:500}
.navs{position:absolute;right:12px;top:101px;display:grid;gap:5px}
.navs button{width:28px;height:28px;border-radius:50%;background:#333;color:#e8e8e8;display:grid;place-items:center}
.edgel{position:absolute;left:-5px;top:18px}
.edger{position:absolute;right:-2px;top:18px;opacity:.7}

.sheet .hdr{padding:0 0 0 8px;gap:8px}
.pv{width:94px;justify-content:space-between;padding:0 3px 0 6px}
.crumb{display:flex;align-items:center;gap:12px;white-space:nowrap}
.sheet .crumb{gap:10px}
.sheet .crumb .c{margin:0 2px 0 4px}
.edgebtn .b{min-width:3px;width:3px}
.edgebtn{border-radius:4px 0 0 4px}
.sbody{flex:1;display:flex;position:relative;min-height:0}
.tree{width:172px;flex:none;overflow:hidden;border-right:5px solid #3a3a3a;background:#292929;color:#d4d4d4}
.tree h2{height:36px;display:flex;align-items:center;gap:5px;padding-left:9px;background:#303030}
.tree .selrow+h2{height:32px}
.selrow{height:20px;margin:5px 6px 3px;background:#4772b3;border-radius:3px;display:flex;align-items:center;gap:10px;padding-left:22px}
.tree ul{padding-top:4px}
.tree li{height:24px;display:flex;align-items:center;gap:10px;padding:0 12px 0 10px}
.tree li .c{margin-right:-6px}
.tree .i{width:16px;height:16px}
.tree li b{margin-left:auto;font-weight:400;color:#7a7a7a}
.tree .sub{margin-left:19px;border-left:1px solid #484848;padding-left:24px}
.tree .leaf{padding-left:28px}
.tree .act{margin:2px 6px 0;padding:0 6px 0 22px;background:#4772b3;border-radius:3px;height:20px}
.cells{flex:1;background:linear-gradient(#303030 22px,#1e1e1e 22px,#1e1e1e 23px,transparent 23px),linear-gradient(90deg,#303030 22px,#1e1e1e 22px,#1e1e1e 23px,transparent 23px),repeating-linear-gradient(#282828 0 24px,#2b2b2b 24px 48px)}
.sfoot{height:25px;flex:none;display:flex;align-items:center;justify-content:flex-end;gap:11px;padding-right:8px}
.sfoot i,.mem i{display:inline-block;width:1px;height:14px;background:#999}

.mated,.geoed{background:#1d1d1d;border-color:#2c2c2c}
.mated .hdr{gap:5px;padding:0 6px}
.mated .wide{flex:1}
.wide span{margin-left:6px}
.wide .c{margin-left:auto}
.mcrumb{display:flex;align-items:center;height:48px;gap:9px;margin-right:-6px}
.mcrumb .c{margin:0 -4px}
.mcrumb .c:first-child{margin:0 2px 0 -5px}
.mcrumb .i{width:17px}
.mcrumb .c:last-child{margin-left:4px}
.mlink{position:absolute;left:0;top:0;width:30px;height:230px;pointer-events:none}
.bsdf{position:absolute;left:22px;right:0;top:89px;height:251px;background:#2f2f2f;border-radius:5px 0 0 5px;font-size:16px;white-space:nowrap}
.bsdf h3{height:30px;background:#2d7128;display:flex;align-items:center;gap:6px;padding-left:14px;border-radius:5px 0 0;overflow:hidden;font-size:16px}
.bsdf .dist{margin:45px 0 0 15px;height:30px;line-height:28px;padding-left:10px;border:1px solid #424242;border-right:0;background:#282828;overflow:hidden}
.sk{height:34px;line-height:34px;padding-left:16px;position:relative;color:#ccc}
.dist+.sk{margin-top:1px}
.sk.fld{padding-left:39px;background:linear-gradient(90deg,#2f2f2f 15px,#484848 15px);box-shadow:inset 0 -2px #2f2f2f;color:#999}
.sk::before{content:"";position:absolute;left:-6px;top:11px;width:12px;height:12px;border-radius:50%;background:#9a9a9a}
.sk.y::before{background:#c1d02c}
.sk.v::before{background:#6a5bc8}
.mated .vbar{position:absolute;right:3px;top:28px;bottom:14px;width:4px;border-radius:2px;background:#383838}

.canvas{position:absolute;inset:-1px}
.links{position:absolute;inset:0;width:100%;height:100%}
.geoed .hdr{padding:0 8px 0 6px;gap:6px}
.modif{width:74px;justify-content:space-between;padding:0 2px 0 8px}
.geoed .mn{padding:0 8px 0 6px}
.gname{margin-left:243px;background:#1b1b1b;border:1px solid #2c2c2c;align-items:center}
.gname .dd{width:34px;background:#262626}
.gname input{width:88px;padding-left:8px}
.gpin{margin-left:3px}
.sp{border-radius:4px}
.gbody{flex:1;display:flex;min-height:0;position:relative}
.geoed .crumb{flex:1;height:48px;gap:9px}
.geoed .crumb .c{margin:0 0 0 4px}
.geoed .crumb .c:first-child{margin:0 3px 0 -5px}
.side{width:277px;background:#383838;padding:0 9px;overflow:hidden;flex:none;border-right:4px solid #404040}
.side h2{height:38px;display:flex;align-items:center;gap:4px;padding:0 2px 6px 0;font-weight:500}
.grip{margin-left:auto;opacity:.6}
.iface{display:flex;gap:10px;padding-left:7px}
.iface ul{width:218px;background:#282828;padding:3px 0 2px;border-radius:4px;color:#c8c8c8;flex:none}
.iface li{height:24px;display:flex;align-items:center;gap:12px;padding-left:31px}
.d{width:8px;height:8px;border-radius:50%;background:#a1a1a1;outline:1px solid #1b1b1b}
.d.geo{background:#19e3a0}.d.int{background:#5d8f66}.d.menu{background:#666}.d.yel{background:#c4d63b}
.iface .out{padding-left:46px}
.out .d{margin-left:auto;margin-right:23px}
.iface .act{height:20px;margin:2px 13px 2px 5px;padding-left:26px;background:#4772b3;border-radius:3px;color:#c3d3ef}
.iface .hd{padding-left:9px;gap:3px}
.iface .in{margin-left:17px;border-left:1px solid #444;padding-left:28px}
.iface .gr{height:13px;padding:0;justify-content:center}
.btns{display:flex;flex-direction:column}
.btns button{width:20px;height:20px;background:#272727;display:grid;place-items:center;border-radius:3px}
.btns .g{background:#505050}
.btns button:last-child{margin-top:9px}
.btns .i{width:16px;height:16px}
.frow{display:flex;align-items:center;gap:10px;margin:6px 0 0;height:20px}
.frow label{width:103px;text-align:right}
.frow .sel,.frow input{width:144px;height:20px}
.frow input{background:#1d1d1d;border-radius:3px}
.sel{position:relative;display:flex;align-items:center;background:#272727;border-radius:3px}
.sel select{appearance:none;width:100%;height:20px;padding:0 8px;line-height:20px}
.sel .c{position:absolute;right:1px}
.vtabs{width:28px;display:flex;flex-direction:column;gap:5px;padding:5px 6px 0 2px;flex:none}
.vtabs button{writing-mode:vertical-rl;width:20px;padding:8px 0;border:1px solid #333;border-left:0;border-radius:0 4px 4px 0;background:#222;color:#ccc;line-height:18px}
.vtabs .on{background:#303030;color:#fff}
.cast{position:absolute;left:35px;top:229px;font-size:20px;line-height:24px;color:#fff;font-weight:500;white-space:nowrap;pointer-events:none}
.cast svg{display:block;width:36px;height:46px;margin:8px 0 0 -1px}
.cast hr{width:103px;height:2px;border:0;background:#fff;margin:8px 0}

.node{position:absolute;width:73px;font-size:6px;line-height:10px;background:#303030;border-radius:2px;box-shadow:0 1px 4px #000;padding-bottom:2px;color:#d0d0d0;white-space:nowrap}
.node svg{width:6px;height:6px;flex:none}
.node .ms{height:10px;display:flex;align-items:center;gap:4px;padding-left:3px;background:#222;color:#bbb}
.node .ms svg{width:8px;height:8px}
.node h3{height:10px;margin-bottom:1px;display:flex;align-items:center;gap:3px;padding:0 4px;font-size:6px;color:#e2e2e2;border-radius:2px 2px 0 0}
.node h3 .end{margin-left:auto;width:8px;height:8px}
.green{background:#1f7d5c}.blue{background:#27637f}.red{background:#7f2348}.wine{background:#3d1a28}.olive{background:#36501f}
.node p{height:12px;line-height:12px;padding:0 6px;position:relative}
.node .o{text-align:right}
.node p::before{position:absolute;left:-2px;top:4px;width:4px;height:4px;border-radius:50%;z-index:1}
.node .o::before{left:auto;right:-2px}
.node .geo::before{content:"";background:#2bd9a2}
.node .bool::before{content:"";background:#cca6d6}
.node .int::before{content:"";background:#5d8f66}
.node .gray::before{content:"";background:#777}
.node .str::before{content:"";background:#6f8fd0}
.node .dia::before{content:"";border:1px solid #aaa;background:#222}
.node .col::before{border-color:#c1d02c}
.node .f{display:flex;justify-content:space-between;padding:1px 14px 1px 13px;line-height:10px;fill:none;background:linear-gradient(#4d4d4d,#4d4d4d) 6px 1px/calc(100% - 12px) 10px no-repeat}
.node .half{background:linear-gradient(90deg,#4772b3 50%,#4d4d4d 50%) 6px 1px/calc(100% - 12px) 10px no-repeat}
.node .full{background-image:linear-gradient(#4772b3,#4772b3)}
.node b{font-weight:400}
.node .ds{height:11px;margin:1px 6px;padding:0 3px;background:#272727;border-top:1px solid #3b3b3b;display:flex;align-items:center;justify-content:space-between}
.str span{display:block;background:#1f1f1f;padding-left:3px;margin-left:-2px}
.big{width:139px;padding-bottom:3px}
.big h3{margin-bottom:2px}
.grp{height:11px;margin:1px 6px;display:flex;align-items:center;gap:9px;padding:0 2px;background:#262626}
.grp span{flex:1;background:#1a1a1a;padding-left:2px}
.grp svg{width:8px;height:8px}
.big .ds{height:10px}
.node .col{display:flex;justify-content:space-between;align-items:center}
.col b{width:74px;height:9px;background:#e6e6e6}
.fold{display:flex;gap:5px;align-items:center}
.n-split{left:5px;top:120px}
.n-view{left:521px;top:79px;width:74px;height:51px;border:1px solid #d8d8d8}
.n-sep{left:401px;top:123px}
.n-rand{left:222px;top:239px}
.n-isle{left:109px;top:262px}
.n-attr{left:157px;top:344px}
.n-switch{left:-4px;top:291px;border-radius:0}
.n-menu{left:-4px;top:422px;width:65px}
.n-idx{left:490px;top:428px}
.n-win{left:859px;top:128px}
.n-fix{left:851px;top:388px}
.canvas .vbar{position:absolute;left:1008px;top:222px;width:4px;height:190px;background:#303030;border-radius:2px}
.canvas .hbar{position:absolute;left:635px;bottom:0;width:240px;height:4px;background:#303030;border-radius:2px}
.pointer{position:absolute;left:291px;top:370px;width:26px;height:28px}

.timeline{flex-direction:row;align-items:center;padding:0 20px 0 10px;gap:6px}
.tmn{display:flex;gap:15px;padding-left:8px}
.tmn button{display:flex;align-items:center}
.tmn .c{margin:2px -4px 0 4px}
.timeline .grow{flex:151}
.timeline .a{flex:405}
.timeline .play{margin-left:4px}
.play button{width:22px}
.num{height:21px;background:#505050;border-radius:4px;text-align:center}
.w80{width:80px}.w88{width:88px}.w36{width:36px;border-radius:4px}
.rng{display:flex;align-items:center;justify-content:space-between;width:95px;padding:0 17px;border-radius:0;margin-left:1px}
.rng input{width:30px;text-align:right}

.outliner{background:#282828}
.outliner .hdr,.props .hdr{padding:0 8px 0 6px;gap:6px}
.props .hdr{height:25px}
.find{display:flex;align-items:center;gap:8px;width:127px;height:21px;padding-left:3px;background:#1d1d1d;border:1px solid #333;border-radius:4px;flex:none}
.find input{width:80px}
.find input::placeholder{color:#666;opacity:1}
.outliner .o1{flex:60}.outliner .o2{flex:107}
.props .o1{flex:118}.props .o2{flex:132}
.orows li{height:22px;display:flex;align-items:center;gap:5px;padding:0 12px 0 25px;color:#b9b9b9}
.orows li:nth-child(even){background:#2b2b2b}
.orows .c{margin-right:-1px}
.orows .i{width:17px;height:17px;color:#dcdcdc}
.orows .root{padding-left:24px;gap:6px}
.orows .wht{color:#fff}
.chip{width:21px;height:20px;background:#484848;border-radius:4px;display:grid;place-items:center;position:relative}
.ic{width:21px;height:20px;display:grid;place-items:center}
.cnt,.teal.chip{margin-left:17px}
.orows .orange .i,.orange{color:#c87b41}
.orows .teal .i,.teal{color:#17b585}
.cnt sub{position:absolute;left:12px;top:8px;font-size:10px;line-height:12px;color:#eee}
.orows input{appearance:none;width:12px;height:12px;background:#e2e2e2;border-radius:2px;margin-right:2px;position:relative}
.orows input::after{content:"";position:absolute;left:4px;top:1px;width:4px;height:8px;border:solid #222;border-width:0 2px 2px 0;rotate:40deg}

.pbody{flex:1;display:flex;min-height:0}
.ptabs{width:30px;background:#1b1b1b;display:flex;flex-direction:column;padding-top:8px;color:#a8a8a8;flex:none;align-self:start;height:100%}
.ptabs button{height:30px;flex:none;display:grid;place-items:center}
.ptabs .gap{margin-bottom:8px}
.ptabs .on{background:#303030;color:#7d93e8}
.ptabs .bl{color:#6c82c8}
.ptabs .orange{color:#c87b41}.ptabs .teal{color:#17b585}.ptabs .rose{color:#b8415d}
.pmain{flex:1;min-width:0;padding:0 9px 0 8px}
.props .crumb{height:38px;gap:10px;padding:0 0 0 2px}
.props .crumb .c{margin:0 -2px 0 6px}
.addmod{width:100%;height:20px;margin:9px 0 10px;padding-left:19px;background:#505050;border-radius:3px;position:relative;text-align:center}
.addmod .i{position:absolute;left:3px;top:2px;width:16px;height:16px}
.panel{border:1px solid #46679c;border-radius:4px;background:#3a3a3a;height:447px}
.mh{height:24px;display:flex;align-items:center;gap:4px;padding:0 5px 0 4px}
.mh .join{flex:1;margin:0 1px 0 5px}
.mh input,.ng input{flex:1;background:#1c1c1c;height:21px;padding-left:8px}
.mh .join .i{width:17px}
.mh button{width:22px}
.mh .join .dd{background:#2a2a2a}
.mh .grip{margin-left:4px}
.ng{margin:10px 8px 4px;height:20px}
.ng .g{width:22px}
.pr{display:grid;grid-template-columns:146px minmax(0,1fr) 22px 8px;align-items:center;height:27px;padding-right:20px}
.pr label{text-align:right}
.pr>:nth-child(2){margin-left:10px;height:20px}
.pr>input{background:#505050;border-radius:3px;text-align:center}
.pr i{width:4px;height:4px;border-radius:50%;background:#ddd;margin-left:9px}
.at{height:20px;background:#4a4a4a;display:grid;place-items:center}
.sw{border-radius:3px 0 0 3px}
.violet{background:#6458dc}.lime{background:#8cfa58}
.panel h3{height:27px;display:flex;align-items:center;gap:6px;padding-left:8px}
.subp{background:#343434;padding:4px 0 0}

.status{height:24px;flex:none;display:flex;align-items:center;gap:10px;padding:0 14px 0 8px;color:#858585;position:relative}
.status span{display:flex;align-items:center;gap:2px}
.status .mem{gap:4px}
.mem i{margin:0 1px;background:#777}
.status .mark{position:absolute;left:10px;top:-28px;display:flex;align-items:center;gap:10px;opacity:.3;pointer-events:none;color:#fff}
.mark svg{width:40px;height:36px}
.mark span{font-size:36px;line-height:40px;font-weight:700}
```
